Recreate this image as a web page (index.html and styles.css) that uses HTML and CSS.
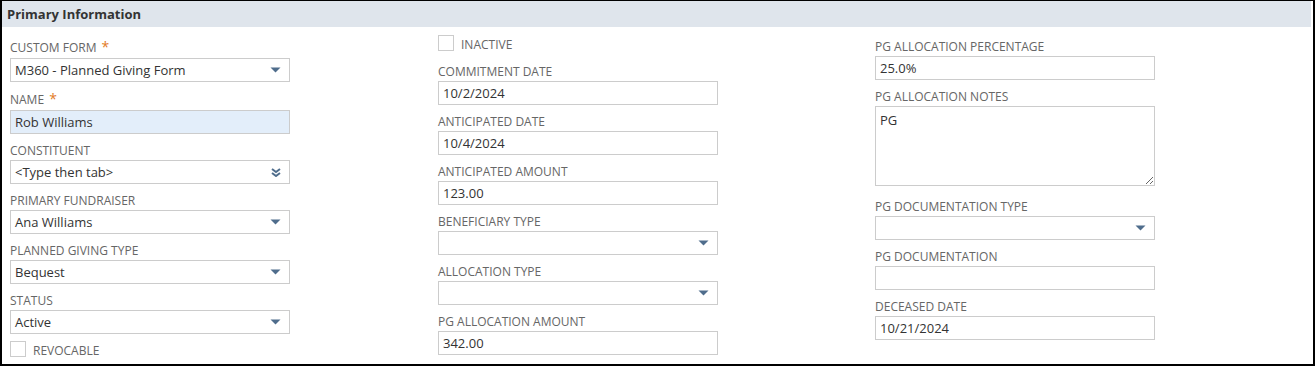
FILE: index.html
```html
<!DOCTYPE html>
<html lang="en">
    <head>
        <meta charset="utf-8">
        <meta name="viewport" content="width=device-width, initial-scale=1.0">
        <title>Planned Giving - Primary Information</title>
        <link rel="stylesheet" href="styles.css">
    </head>
    <body>
        <div class="frame">
            <div class="section-head">Primary Information</div>

            <div class="fields">
                <!-- first column -->
                <div class="col col-one">
                    <div class="field">
                        <div class="label req">CUSTOM FORM <span class="star">*</span></div>
                        <div class="box select">
                            <span class="value">M360 - Planned Giving Form</span>
                            <svg class="arrow" width="11" height="6" viewBox="0 0 11 6"><path d="M0.5 0.5 H10.5 L5.5 5.5 Z" fill="#4f6d8c"/></svg>
                        </div>
                    </div>
                    <div class="field">
                        <div class="label req">NAME <span class="star">*</span></div>
                        <div class="box mandatory"><span class="value">Rob Williams</span></div>
                    </div>
                    <div class="field">
                        <div class="label">CONSTITUENT</div>
                        <div class="box select">
                            <span class="value">&lt;Type then tab&gt;</span>
                            <svg class="arrow" width="10" height="9" viewBox="0 0 10 9"><path d="M1 1 L5 4 L9 1 M1 5 L5 8 L9 5" fill="none" stroke="#4f6d8c" stroke-width="2"/></svg>
                        </div>
                    </div>
                    <div class="field">
                        <div class="label">PRIMARY FUNDRAISER</div>
                        <div class="box select">
                            <span class="value">Ana Williams</span>
                            <svg class="arrow" width="11" height="6" viewBox="0 0 11 6"><path d="M0.5 0.5 H10.5 L5.5 5.5 Z" fill="#4f6d8c"/></svg>
                        </div>
                    </div>
                    <div class="field">
                        <div class="label">PLANNED GIVING TYPE</div>
                        <div class="box select">
                            <span class="value">Bequest</span>
                            <svg class="arrow" width="11" height="6" viewBox="0 0 11 6"><path d="M0.5 0.5 H10.5 L5.5 5.5 Z" fill="#4f6d8c"/></svg>
                        </div>
                    </div>
                    <div class="field short">
                        <div class="label">STATUS</div>
                        <div class="box select">
                            <span class="value">Active</span>
                            <svg class="arrow" width="11" height="6" viewBox="0 0 11 6"><path d="M0.5 0.5 H10.5 L5.5 5.5 Z" fill="#4f6d8c"/></svg>
                        </div>
                    </div>
                    <div class="check">
                        <span class="checkbox"></span>
                        <span class="label">REVOCABLE</span>
                    </div>
                </div>

                <!-- second column -->
                <div class="col col-two">
                    <div class="check top">
                        <span class="checkbox"></span>
                        <span class="label">INACTIVE</span>
                    </div>
                    <div class="field">
                        <div class="label">COMMITMENT DATE</div>
                        <div class="box"><span class="value">10/2/2024</span></div>
                    </div>
                    <div class="field">
                        <div class="label">ANTICIPATED DATE</div>
                        <div class="box"><span class="value">10/4/2024</span></div>
                    </div>
                    <div class="field">
                        <div class="label">ANTICIPATED AMOUNT</div>
                        <div class="box"><span class="value">123.00</span></div>
                    </div>
                    <div class="field">
                        <div class="label">BENEFICIARY TYPE</div>
                        <div class="box select">
                            <span class="value"></span>
                            <svg class="arrow" width="11" height="6" viewBox="0 0 11 6"><path d="M0.5 0.5 H10.5 L5.5 5.5 Z" fill="#4f6d8c"/></svg>
                        </div>
                    </div>
                    <div class="field">
                        <div class="label">ALLOCATION TYPE</div>
                        <div class="box select">
                            <span class="value"></span>
                            <svg class="arrow" width="11" height="6" viewBox="0 0 11 6"><path d="M0.5 0.5 H10.5 L5.5 5.5 Z" fill="#4f6d8c"/></svg>
                        </div>
                    </div>
                    <div class="field">
                        <div class="label">PG ALLOCATION AMOUNT</div>
                        <div class="box"><span class="value">342.00</span></div>
                    </div>
                </div>

                <!-- third column -->
                <div class="col col-three">
                    <div class="field">
                        <div class="label">PG ALLOCATION PERCENTAGE</div>
                        <div class="box"><span class="value">25.0%</span></div>
                    </div>
                    <div class="field notes">
                        <div class="label">PG ALLOCATION NOTES</div>
                        <textarea class="area">PG</textarea>
                    </div>
                    <div class="field">
                        <div class="label">PG DOCUMENTATION TYPE</div>
                        <div class="box select">
                            <span class="value"></span>
                            <svg class="arrow" width="11" height="6" viewBox="0 0 11 6"><path d="M0.5 0.5 H10.5 L5.5 5.5 Z" fill="#4f6d8c"/></svg>
                        </div>
                    </div>
                    <div class="field">
                        <div class="label">PG DOCUMENTATION</div>
                        <div class="box"><span class="value"></span></div>
                    </div>
                    <div class="field">
                        <div class="label">DECEASED DATE</div>
                        <div class="box"><span class="value">10/21/2024</span></div>
                    </div>
                </div>
            </div>
        </div>
    </body>
</html>
```

FILE: styles.css
```css
/* whole page */
body{
    margin: 0;
    font-family: "Open Sans", "Liberation Sans", Arial, sans-serif;
    background-color: white;
}

/* black outline round the form */
.frame{
    width: 1315px;
    height: 366px;
    box-sizing: border-box;
    border-top: 1px solid black;
    border-left: 2px solid black;
    border-right: 2px solid black;
    border-bottom: 2px solid black;
    overflow: hidden;
}

/* grey band with the section title */
.section-head{
    height: 26px;
    line-height: 26px;
    margin-right: 2px;
    padding-left: 5px;
    background-color: #dfe5ec;
    color: #333;
    font-size: 13px;
    font-weight: bold;
}

/* three columns of fields */
.fields{
    display: grid;
    grid-template-columns: 428px 437px 1fr;
    padding-left: 8px;
    align-items: start;
}
.col-one{
    padding-top: 13px;
}
.col-two{
    padding-top: 7px;
}
.col-three{
    padding-top: 13px;
}

.field{
    width: 280px;
    margin-bottom: 10px;
}
.field.short{
    margin-bottom: 6px;
}

.label{
    font-size: 12px;
    line-height: 14px;
    color: #666;
    margin-bottom: 2px;
}
.label.req{
    line-height: 16px;
}
.star{
    color: #e27b26;
    font-size: 14px;
    line-height: 14px;
    margin-left: 2px;
}

/* the input boxes */
.box{
    height: 24px;
    box-sizing: border-box;
    border: 1px solid #ccc;
    background-color: white;
    display: flex;
    align-items: center;
    padding-left: 4px;
    padding-right: 8px;
    font-size: 13px;
    color: #333;
}
.box.mandatory{
    background-color: #e3eefa;
}
.select .value{
    flex: 1;
}
.arrow{
    display: block;
}

.area{
    display: block;
    width: 280px;
    height: 80px;
    box-sizing: border-box;
    margin: 0;
    border: 1px solid #ccc;
    padding: 4px 4px;
    font-family: "Open Sans", "Liberation Sans", Arial, sans-serif;
    font-size: 13px;
    color: #333;
    resize: both;
}
.notes{
    margin-bottom: 14px;
}

/* check boxes */
.check{
    display: flex;
    align-items: center;
    gap: 7px;
}
.check.top{
    margin-bottom: 13px;
}
.checkbox{
    width: 16px;
    height: 16px;
    box-sizing: border-box;
    border: 1px solid #ccc;
    background-color: white;
}
.check .label{
    margin-bottom: 0;
    margin-top: 4px;
}
```
